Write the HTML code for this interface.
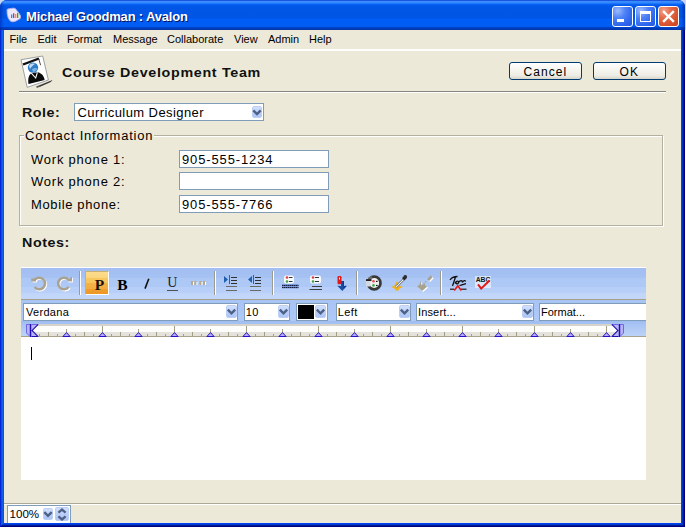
<!DOCTYPE html>
<html><head><meta charset="utf-8">
<style>
*{box-sizing:border-box;margin:0;padding:0}
html,body{width:686px;height:528px;overflow:hidden;background:#fff;font-family:"Liberation Sans",sans-serif;font-size:11px;color:#000;position:relative}
.a{position:absolute;overflow:visible}
.t{position:absolute;white-space:pre}
.box{position:absolute}
.dd{position:absolute;border:1px solid #BCCFF6;border-radius:2px;background:linear-gradient(#D2E0FD,#B8CCF8 60%,#AEC5F6)}
</style></head><body>
<div class="box" style="left:0;top:0;width:686px;height:30px;background:#C4D6F2"></div>
<div class="box" style="left:0;top:0;width:685px;height:527px;background:linear-gradient(90deg,#0019CF 0,#0831D9 1px,#166AEE 2px,#0855DD 3px,#0855DD 4px,#0048F0 681px,#0040D8 682px,#0028A8 683px,#000080 684px,#000080 685px);border-radius:7px 7px 0 0"></div>
<div class="box" style="left:0px;top:523px;width:685px;height:4px;clip-path:polygon(4px 0,681px 0,685px 4px,0 4px);background:linear-gradient(#0044F0 0,#0044F0 1px,#0038D4 1px,#0038D4 2px,#001C90 2px,#001C90 3px,#000080 3px)"></div>
<div class="box" style="left:0;top:0;width:685px;height:30px;border-radius:7px 7px 0 0;background:linear-gradient(#1A55DC 0,#1A55DC 1px,#3D8EFF 1px,#3388FF 3px,#0A66F6 4px,#0056E6 6px,#0055E4 18px,#005EF6 19px,#005CF2 26.5px,#0042C4 27.5px,#0034A8 30px)"></div>
<div class="box" style="left:0;top:0;width:685px;height:30px;border-radius:7px 7px 0 0;background:linear-gradient(90deg,rgba(0,30,160,.5) 0,rgba(0,30,160,0) 4px,rgba(0,30,160,0) 681px,rgba(0,30,160,.6) 685px)"></div>
<svg class="a" style="left:0;top:0" width="30" height="30">
<path d="M7 11 Q6.5 8.5 9 8.8 L12.5 8.2 Q15.5 7.6 16.5 10 L19 13.2 Q21.5 16.2 20.2 18.6 L16 21 Q12.5 22.6 10.5 21.2 L8.3 18.3 Q6.8 14 7 11 Z" fill="#ECE8FC" stroke="#B4ACEC" stroke-width=".9"/>
<rect x="11" y="14.5" width="1.3" height="3.5" fill="#3080F0"/><rect x="13" y="13.3" width="1.3" height="4.7" fill="#E83020"/>
<rect x="15" y="14" width="1.3" height="4" fill="#F89820"/><rect x="17" y="12.8" width="1.3" height="5.2" fill="#20B020"/>
</svg>
<div class="t" style="left:26px;top:10.40px;font-size:13px;line-height:13px;font-weight:700;letter-spacing:-0.17px;color:#fff;text-shadow:1px 1px 0 #001060">Michael Goodman : Avalon</div>
<div class="box" style="left:612px;top:6px;width:21px;height:21px;border:1px solid #fff;border-radius:3px;background:radial-gradient(circle at 25% 20%,#9DBBFF 0,#4F83F6 35%,#2E66EE 70%,#2259DE)"></div><div class="box" style="left:617px;top:19px;width:7px;height:3px;background:#fff"></div>
<div class="box" style="left:635px;top:6px;width:21px;height:21px;border:1px solid #fff;border-radius:3px;background:radial-gradient(circle at 25% 20%,#9DBBFF 0,#4F83F6 35%,#2E66EE 70%,#2259DE)"></div><div class="box" style="left:640px;top:11px;width:11px;height:11px;border:1px solid #fff;border-top-width:3px"></div>
<div class="box" style="left:658px;top:6px;width:21px;height:21px;border:1px solid #fff;border-radius:3px;background:radial-gradient(circle at 25% 20%,#F3A28B 0,#E46A48 35%,#D8502C 70%,#C84420)"></div><svg class="a" style="left:658px;top:6px" width="21" height="21"><path d="M6 6 L15 15 M15 6 L6 15" stroke="#fff" stroke-width="2.4" stroke-linecap="square"/></svg>
<div class="box" style="left:4px;top:30px;width:677px;height:493px;background:#ECE9D8"></div>
<div class="box" style="left:4px;top:49px;width:677px;height:2px;background:#fff"></div>
<div class="t" style="left:9.5px;top:33.69px;font-size:11px;line-height:11px;font-weight:400;letter-spacing:0px;color:#000;">File</div>
<div class="t" style="left:37.5px;top:33.69px;font-size:11px;line-height:11px;font-weight:400;letter-spacing:0px;color:#000;">Edit</div>
<div class="t" style="left:67px;top:33.69px;font-size:11px;line-height:11px;font-weight:400;letter-spacing:0px;color:#000;">Format</div>
<div class="t" style="left:113px;top:33.69px;font-size:11px;line-height:11px;font-weight:400;letter-spacing:0px;color:#000;">Message</div>
<div class="t" style="left:167px;top:33.69px;font-size:11px;line-height:11px;font-weight:400;letter-spacing:0px;color:#000;">Collaborate</div>
<div class="t" style="left:234px;top:33.69px;font-size:11px;line-height:11px;font-weight:400;letter-spacing:0px;color:#000;">View</div>
<div class="t" style="left:268px;top:33.69px;font-size:11px;line-height:11px;font-weight:400;letter-spacing:0px;color:#000;">Admin</div>
<div class="t" style="left:309px;top:33.69px;font-size:11px;line-height:11px;font-weight:400;letter-spacing:0px;color:#000;">Help</div>
<svg class="a" style="left:15px;top:52px" width="40" height="40" viewBox="0 0 40 40">
<path d="M21 34.5 L37.5 28 L35 30.5 L22 36 Z" fill="#5A5A5A"/>
<path d="M24 34 L37.5 28.2 L36 29.5 L25 34.5 Z" fill="#303030"/>
<path d="M6 7.7 L27.7 4 L33.4 28 L12.2 35.4 Z" fill="#fff" stroke="#A0A0A0" stroke-width="1"/>
<path d="M7.5 11.5 L23.5 5.5 L24.5 7.5 L8.5 13.5 Z" fill="#111"/>
<path d="M23.8 7 L25.6 13.2" stroke="#333" stroke-width=".9"/>
<circle cx="18" cy="15.6" r="5.2" fill="#2F7CC8"/>
<path d="M14 14 C15 11.5 18 11 20 12 C18.5 13 16.5 14.5 15 17 Z" fill="#CFE4F8" opacity=".9"/>
<path d="M17 17 C19 16 21 15.5 22.5 16.5 C21.5 18.5 19.5 20 18 20 Z" fill="#8EC0EC" opacity=".8"/>
<path d="M13.4 31.5 C12.8 27 13.6 23 16.5 21.3 L22.5 20.3 C26.5 21 29 24 29.6 28 L13.6 32 Z" fill="#0A0A0A"/>
<path d="M16.3 21.2 L20.7 26 L22.4 20.3" fill="none" stroke="#fff" stroke-width="1.1"/>
</svg>
<div class="t" style="left:62px;top:66.00px;font-size:13px;line-height:13px;font-weight:700;letter-spacing:0.62px;color:#111;transform:scaleX(1.1);transform-origin:0 0">Course Development Team</div>
<div class="box" style="left:509px;top:62px;width:73px;height:18px;border:1px solid #003C74;border-radius:3px;background:linear-gradient(#FFFFFF 0,#F6F5F0 40%,#ECEBE4 80%,#D8D4C8)"></div><div class="t" style="left:523.5px;top:66.34px;font-size:12px;line-height:12px;font-weight:400;letter-spacing:1.05px;color:#000;">Cancel</div>
<div class="box" style="left:593px;top:62px;width:73px;height:18px;border:1px solid #003C74;border-radius:3px;background:linear-gradient(#FFFFFF 0,#F6F5F0 40%,#ECEBE4 80%,#D8D4C8)"></div><div class="t" style="left:619.5px;top:66.34px;font-size:12px;line-height:12px;font-weight:400;letter-spacing:1.05px;color:#000;">OK</div>
<div class="box" style="left:19px;top:91px;width:647px;height:1px;background:#878580"></div>
<div class="box" style="left:19px;top:92px;width:647px;height:1px;background:#FFFFFF"></div>
<div class="t" style="left:22px;top:106.00px;font-size:13px;line-height:13px;font-weight:700;letter-spacing:0.45px;color:#111;transform:scaleX(1.1);transform-origin:0 0">Role:</div>
<div class="box" style="left:74px;top:103px;width:190px;height:18px;border:1px solid #7F9DB9;background:#fff"></div>
<div class="t" style="left:77.5px;top:105.80px;font-size:13px;line-height:13px;font-weight:400;letter-spacing:0.42px;color:#000;">Curriculum Designer</div>
<div class="dd" style="left:252px;top:105.5px;width:10px;height:12.5px"></div><svg class="a" style="left:252px;top:105.5px" width="10" height="12.5"><path d="M1.2999999999999998 4.35 L5.0 8.15 L8.7 4.35" fill="none" stroke="#4D6185" stroke-width="2.3"/></svg>
<div class="box" style="left:19px;top:135px;width:644px;height:91px;border:1px solid #B4B0A0;box-shadow:inset 1px 1px 0 #fff, 1px 1px 0 #fff"></div>
<div class="box" style="left:24px;top:128px;width:130px;height:12px;background:#ECE9D8"></div>
<div class="t" style="left:25.4px;top:130.04px;font-size:12px;line-height:12px;font-weight:400;letter-spacing:0.74px;color:#000;transform:scaleX(1.08);transform-origin:0 0">Contact Information</div>
<div class="t" style="left:31.3px;top:154.34px;font-size:12px;line-height:12px;font-weight:400;letter-spacing:0.74px;color:#000;transform:scaleX(1.08);transform-origin:0 0">Work phone 1:</div>
<div class="box" style="left:179px;top:150px;width:150px;height:18px;border:1px solid #7F9DB9;background:#fff"></div>
<div class="t" style="left:181.8px;top:154.04px;font-size:12px;line-height:12px;font-weight:400;letter-spacing:0.82px;color:#000;transform:scaleX(1.08);transform-origin:0 0">905-555-1234</div>
<div class="t" style="left:31.3px;top:176.34px;font-size:12px;line-height:12px;font-weight:400;letter-spacing:0.74px;color:#000;transform:scaleX(1.08);transform-origin:0 0">Work phone 2:</div>
<div class="box" style="left:179px;top:172px;width:150px;height:18px;border:1px solid #7F9DB9;background:#fff"></div>
<div class="t" style="left:30.6px;top:199.34px;font-size:12px;line-height:12px;font-weight:400;letter-spacing:0.6px;color:#000;transform:scaleX(1.08);transform-origin:0 0">Mobile phone:</div>
<div class="box" style="left:179px;top:195px;width:150px;height:18px;border:1px solid #7F9DB9;background:#fff"></div>
<div class="t" style="left:181.8px;top:199.04px;font-size:12px;line-height:12px;font-weight:400;letter-spacing:0.82px;color:#000;transform:scaleX(1.08);transform-origin:0 0">905-555-7766</div>
<div class="t" style="left:22px;top:236.00px;font-size:13px;line-height:13px;font-weight:700;letter-spacing:0.5px;color:#111;transform:scaleX(1.1);transform-origin:0 0">Notes:</div>
<div class="box" style="left:21px;top:267px;width:625px;height:1px;background:#fff"></div>
<div class="box" style="left:21px;top:268px;width:625px;height:31px;background:linear-gradient(#A2BEF2 0,#A6C2F3 10px,#AEC8F5 10px,#AFC9F6 19px,#B7CFF8 19px,#B8D0F8 25px,#C1D5FA 25px,#C3D7FA 31px)"></div>
<div class="box" style="left:21px;top:299px;width:625px;height:1px;background:#A59F8A"></div>
<div class="box" style="left:21px;top:300px;width:625px;height:37px;background:linear-gradient(#A8C4F5,#B4CDF8)"></div>
<div class="box" style="left:21px;top:337px;width:625px;height:143px;background:#fff"></div>
<div class="box" style="left:31px;top:347px;width:1px;height:13px;background:#000"></div>
<div class="box" style="left:79px;top:271px;width:1px;height:24px;background:#9D9C8C"></div><div class="box" style="left:80px;top:271px;width:1px;height:24px;background:#fff"></div>
<div class="box" style="left:214px;top:271px;width:1px;height:24px;background:#9D9C8C"></div><div class="box" style="left:215px;top:271px;width:1px;height:24px;background:#fff"></div>
<div class="box" style="left:272px;top:271px;width:1px;height:24px;background:#9D9C8C"></div><div class="box" style="left:273px;top:271px;width:1px;height:24px;background:#fff"></div>
<div class="box" style="left:356px;top:271px;width:1px;height:24px;background:#9D9C8C"></div><div class="box" style="left:357px;top:271px;width:1px;height:24px;background:#fff"></div>
<div class="box" style="left:440px;top:271px;width:1px;height:24px;background:#9D9C8C"></div><div class="box" style="left:441px;top:271px;width:1px;height:24px;background:#fff"></div>
<div class="box" style="left:85px;top:271px;width:24px;height:24px;border:1px solid #fff;border-top-color:#C8B070;border-left-color:#C8B070;background:linear-gradient(#FCDC8E 0,#FAD57C 6px,#F8C862 6px,#F7C35C 11px,#F4B246 11px,#F3AC40 17px,#EF9E2E 17px,#EC9826 22px)"></div>
<div class="t" style="left:94.8px;top:276.68px;font-size:15.5px;line-height:15.5px;font-weight:700;letter-spacing:0px;color:#181008;font-family:'Liberation Serif',serif">P</div>
<div class="t" style="left:117.3px;top:276.68px;font-size:15.5px;line-height:15.5px;font-weight:700;letter-spacing:0px;color:#000;font-family:'Liberation Serif',serif">B</div>
<div class="t" style="left:167.2px;top:276.35px;font-size:14px;line-height:14px;font-weight:400;letter-spacing:0px;color:#1A1A1A;font-family:'Liberation Serif',serif">U</div>
<div class="box" style="left:167px;top:290px;width:11px;height:1px;background:#505050"></div>
<svg class="a" style="left:0;top:0" width="686" height="528"><path d="M148.8 278.8 L145 288.6" stroke="#111" stroke-width="1.6"/></svg>
<svg class="a" style="left:0;top:0" width="686" height="528">
<!-- undo -->
<g transform="translate(.9 .9)" fill="#fff" stroke="#fff">
<path d="M34.6 280 A5.8 5.8 0 1 1 34.6 287" fill="none" stroke-width="2.5"/>
<path d="M31 278.6 L36 278.3 L36 281.6 L31.5 281.4 Z" stroke="none"/></g>
<path d="M34.6 280 A5.8 5.8 0 1 1 34.6 287" fill="none" stroke="#A8A290" stroke-width="2.5"/>
<path d="M31 278.6 L36 278.3 L36 281.6 L31.5 281.4 Z" fill="#A8A290"/>
<!-- redo -->
<g transform="translate(.9 .9)" fill="#fff" stroke="#fff">
<path d="M68.6 280 A5.8 5.8 0 1 0 68.6 287" fill="none" stroke-width="2.5"/>
<path d="M72 276.3 L72 281.6 L67 281.3 Z" stroke="none"/></g>
<path d="M68.6 280 A5.8 5.8 0 1 0 68.6 287" fill="none" stroke="#A8A290" stroke-width="2.5"/>
<path d="M72 276.3 L72 281.6 L67 281.3 Z" fill="#A8A290"/>
<!-- quote -->
<path d="M191 281h2v4h-2zM194.5 281h2v4h-2zM199.5 281h2v4h-2zM203 281h2v4h-2z" fill="#B8A888"/>
<path d="M193 282h1v3h-1zM196.5 282h1v3h-1zM201.5 282h1v3h-1zM205 282h1v3h-1z" fill="#fff"/>
<!-- indent -->
<path d="M224 276 L228 279.5 L224 283 Z" fill="#1F5FB0"/>
<rect x="229" y="275" width="1" height="9" fill="#3060A0"/>
<path d="M231 277h6v1h-6zM231 280h6v1h-6zM231 283h6v1h-6z" fill="#303030"/>
<path d="M226 286h11v1h-11zM226 290h11v1h-11z" fill="#6A6A64"/>
<!-- outdent -->
<path d="M252 276 L248 279.5 L252 283 Z" fill="#1F5FB0"/>
<rect x="253" y="275" width="1" height="9" fill="#3060A0"/>
<path d="M255 277h6v1h-6zM255 280h6v1h-6zM255 283h6v1h-6z" fill="#303030"/>
<path d="M250 286h11v1h-11zM250 290h11v1h-11z" fill="#6A6A64"/>
<!-- list icon 1 -->
<rect x="284" y="275.5" width="10" height="8" rx="2" fill="#fff" opacity=".9"/>
<circle cx="287" cy="277.5" r="1.3" fill="#E04040"/><circle cx="287" cy="281.5" r="1.3" fill="#40A040"/>
<path d="M289 277h3.5v1h-3.5zM289 281h3.5v1h-3.5z" fill="#333"/>
<rect x="282" y="284" width="16.5" height="4.5" fill="#7A98D8"/>
<path d="M282 285.5h16.5M282 287.5h16.5" stroke="#141C40" stroke-width="1" stroke-dasharray="1.5 .5"/>
<!-- list icon 2 -->
<rect x="310" y="275.5" width="11" height="8" rx="2" fill="#fff" opacity=".9"/>
<circle cx="313" cy="277.5" r="1.3" fill="#E04040"/><circle cx="313" cy="281.5" r="1.3" fill="#40A040"/>
<path d="M315 277h4v1h-4zM315 281h4v1h-4z" fill="#333"/>
<path d="M312 286h10v1h-10zM309.5 289h12.5v1h-12.5z" fill="#404040"/>
<!-- red/blue arrow -->
<path d="M341 281 L344 281 L344 286 L346.8 285.8 L342.3 291 L337.3 285.8 L341 286 Z" fill="#1A4CA8"/>
<path d="M342 281 L344 281 L344 286 L346.8 285.8 L344 289 Z" fill="#0A3080" opacity=".6"/>
<rect x="337.5" y="276" width="4" height="8.2" rx="1.3" fill="#E01818"/>
<rect x="339" y="277.5" width="1" height="2" fill="#fff"/>
<!-- circle icon -->
<circle cx="374.2" cy="283" r="6.3" fill="#EEF0F4" stroke="#383838" stroke-width="2.7"/>
<path d="M368.2 281 A6.3 6.3 0 0 1 372 277" fill="none" stroke="#6A6A6A" stroke-width="2.7"/>
<rect x="366" y="281" width="4.2" height="5.5" fill="#D4D8E0"/>
<rect x="366" y="279.2" width="5.5" height="1.8" fill="#1E1E1E"/>
<circle cx="373.5" cy="281.3" r="1.3" fill="#F04848"/><circle cx="373.5" cy="285.4" r="1.3" fill="#40A848"/>
<rect x="376" y="280.8" width="1.6" height="1.2" fill="#111"/><rect x="376" y="284.9" width="1.6" height="1.2" fill="#111"/>
<!-- eyedropper yellow -->
<path d="M397 281 L399.5 285.5 L403 287 L399.5 288.5 L398.5 290.5 L395.5 290.5 L394.5 288.5 L391 287 L394.5 285.5 Z" fill="#F2B01C"/>
<path d="M396 287 L403.5 279.5" stroke="#8C8C8C" stroke-width="2.6"/>
<path d="M396 287 L403.5 279.5" stroke="#E8F0F8" stroke-width="1"/>
<path d="M402 278 L405 275.5 L407 277.5 L404.5 280.5 Z" fill="#202020"/>
<rect x="403.5" y="275" width="3.5" height="3.5" rx="1.5" fill="#303030"/>
<!-- gray arrow -->
<g transform="translate(1 1)" fill="#fff">
<path d="M427 279.2 L430.8 275.2 L432.6 277.3 L429.2 281 Z"/>
<path d="M417.1 286.4 L419.6 284.5 L420.3 280.8 L421.6 285.2 L424.4 284 L427 286.7 L422.1 290.9 Z"/></g>
<path d="M427 279.2 L430.8 275.2 L432.6 277.3 L429.2 281 Z" fill="#A8A290"/>
<path d="M426.3 281.2 L422.4 285.1" stroke="#A8A290" stroke-width="1.3" stroke-dasharray="1.4 1"/>
<path d="M417.1 286.4 L419.6 284.5 L420.3 280.8 L421.6 285.2 L424.4 284 L427 286.7 L422.1 290.9 Z" fill="#A8A290"/>
<!-- signature -->
<path d="M450 280 C451.5 277.5 454.5 276.5 457.5 276.5 M455.5 277 C454.5 280 453.5 283 452.5 286 M455 283.5 C456 280.5 459 280.5 458.5 282.8 C458 284.3 456 284.3 456.3 282.5 M458.5 282.5 C460 280 463 280 462.2 282.5 C463.5 280.5 465.5 280 465.5 281.5 M459.5 285.5 C461.5 284.8 464 284.2 466 283.6" fill="none" stroke="#101010" stroke-width="1.3"/>
<path d="M450 288.5h4v1.5h-4zM461 288.5h5.5v1.5h-5.5z" fill="#404040"/>
<path d="M454.2 290.5 L457.8 285.8 L461.3 290.5" fill="none" stroke="#E01818" stroke-width="1.7"/>
<!-- ABC -->
<rect x="475" y="276" width="16" height="12" fill="#fff" opacity=".55"/>
<text x="475.8" y="282" font-family="Liberation Sans" font-weight="700" font-size="6.8" fill="#151515" letter-spacing="-.1">ABC</text>
<path d="M478 284.3 L481.2 288.6 L489.5 280.5" fill="none" stroke="#E01818" stroke-width="2"/>
</svg>
<div class="box" style="left:23px;top:303px;width:215px;height:18px;border:1px solid #7F9DB9;background:#fff"></div>
<div class="t" style="left:26px;top:306.99px;font-size:11px;line-height:11px;font-weight:400;letter-spacing:0.3px;color:#000;">Verdana</div>
<div class="dd" style="left:226px;top:305px;width:11px;height:13px"></div><svg class="a" style="left:226px;top:305px" width="11" height="13"><path d="M1.7999999999999998 4.6 L5.5 8.4 L9.2 4.6" fill="none" stroke="#4D6185" stroke-width="2.3"/></svg>
<div class="box" style="left:244px;top:303px;width:46px;height:18px;border:1px solid #7F9DB9;background:#fff"></div>
<div class="t" style="left:245.8px;top:306.99px;font-size:11px;line-height:11px;font-weight:400;letter-spacing:0.3px;color:#000;">10</div>
<div class="dd" style="left:278px;top:305px;width:11px;height:13px"></div><svg class="a" style="left:278px;top:305px" width="11" height="13"><path d="M1.7999999999999998 4.6 L5.5 8.4 L9.2 4.6" fill="none" stroke="#4D6185" stroke-width="2.3"/></svg>
<div class="box" style="left:296px;top:303px;width:32px;height:18px;border:1px solid #7F9DB9;background:#fff"></div>
<div class="box" style="left:298px;top:305px;width:16px;height:14px;background:#000"></div>
<div class="dd" style="left:315px;top:305px;width:11px;height:13px"></div><svg class="a" style="left:315px;top:305px" width="11" height="13"><path d="M1.7999999999999998 4.6 L5.5 8.4 L9.2 4.6" fill="none" stroke="#4D6185" stroke-width="2.3"/></svg>
<div class="box" style="left:336px;top:303px;width:75px;height:18px;border:1px solid #7F9DB9;background:#fff"></div>
<div class="t" style="left:337.8px;top:306.99px;font-size:11px;line-height:11px;font-weight:400;letter-spacing:0.4px;color:#000;">Left</div>
<div class="dd" style="left:399px;top:305px;width:11px;height:13px"></div><svg class="a" style="left:399px;top:305px" width="11" height="13"><path d="M1.7999999999999998 4.6 L5.5 8.4 L9.2 4.6" fill="none" stroke="#4D6185" stroke-width="2.3"/></svg>
<div class="box" style="left:416px;top:303px;width:118px;height:18px;border:1px solid #7F9DB9;background:#fff"></div>
<div class="t" style="left:418px;top:306.99px;font-size:11px;line-height:11px;font-weight:400;letter-spacing:0.15px;color:#000;">Insert...</div>
<div class="dd" style="left:522px;top:305px;width:11px;height:13px"></div><svg class="a" style="left:522px;top:305px" width="11" height="13"><path d="M1.7999999999999998 4.6 L5.5 8.4 L9.2 4.6" fill="none" stroke="#4D6185" stroke-width="2.3"/></svg>
<div class="box" style="left:539px;top:303px;width:107px;height:18px;border:1px solid #7F9DB9;border-right:none;background:#fff"></div>
<div class="t" style="left:541px;top:306.99px;font-size:11px;line-height:11px;font-weight:400;letter-spacing:0px;color:#000;">Format...</div>
<div class="box" style="left:21px;top:321px;width:625px;height:15px;background:linear-gradient(#9FBCF2 0,#A9C4F4 4px,#B2CBF6 9px,#BCD2F8 15px)"></div>
<div class="box" style="left:30px;top:324px;width:589px;height:2px;background:#D6D4CA"></div>
<div class="box" style="left:30px;top:326px;width:589px;height:6px;background:#FDFDFB"></div>
<div class="box" style="left:30px;top:332px;width:589px;height:4px;background:#E4E2DA"></div>
<div class="box" style="left:21px;top:336px;width:625px;height:1px;background:#A8A28C"></div>
<svg class="a" style="left:0;top:0" width="686" height="528">
<line x1="39.5" y1="334" x2="39.5" y2="336" stroke="#A49E84"/>
<line x1="48.5" y1="332" x2="48.5" y2="336" stroke="#A49E84"/>
<line x1="57.5" y1="334" x2="57.5" y2="336" stroke="#A49E84"/>
<line x1="66.5" y1="329" x2="66.5" y2="333" stroke="#A49E84"/>
<path d="M62.9 336.5 L66.5 332.6 L70.1 336.5 Z" fill="#B4B0F8" stroke="#2A10C8"/>
<line x1="75.5" y1="334" x2="75.5" y2="336" stroke="#A49E84"/>
<line x1="84.5" y1="332" x2="84.5" y2="336" stroke="#A49E84"/>
<line x1="93.5" y1="334" x2="93.5" y2="336" stroke="#A49E84"/>
<line x1="102.5" y1="326" x2="102.5" y2="333" stroke="#A49E84"/>
<path d="M98.9 336.5 L102.5 332.6 L106.1 336.5 Z" fill="#B4B0F8" stroke="#2A10C8"/>
<line x1="111.5" y1="334" x2="111.5" y2="336" stroke="#A49E84"/>
<line x1="120.5" y1="332" x2="120.5" y2="336" stroke="#A49E84"/>
<line x1="129.5" y1="334" x2="129.5" y2="336" stroke="#A49E84"/>
<line x1="138.5" y1="329" x2="138.5" y2="333" stroke="#A49E84"/>
<path d="M134.9 336.5 L138.5 332.6 L142.1 336.5 Z" fill="#B4B0F8" stroke="#2A10C8"/>
<line x1="147.5" y1="334" x2="147.5" y2="336" stroke="#A49E84"/>
<line x1="156.5" y1="332" x2="156.5" y2="336" stroke="#A49E84"/>
<line x1="165.5" y1="334" x2="165.5" y2="336" stroke="#A49E84"/>
<line x1="174.5" y1="326" x2="174.5" y2="333" stroke="#A49E84"/>
<path d="M170.9 336.5 L174.5 332.6 L178.1 336.5 Z" fill="#B4B0F8" stroke="#2A10C8"/>
<line x1="183.5" y1="334" x2="183.5" y2="336" stroke="#A49E84"/>
<line x1="192.5" y1="332" x2="192.5" y2="336" stroke="#A49E84"/>
<line x1="201.5" y1="334" x2="201.5" y2="336" stroke="#A49E84"/>
<line x1="210.5" y1="329" x2="210.5" y2="333" stroke="#A49E84"/>
<path d="M206.9 336.5 L210.5 332.6 L214.1 336.5 Z" fill="#B4B0F8" stroke="#2A10C8"/>
<line x1="219.5" y1="334" x2="219.5" y2="336" stroke="#A49E84"/>
<line x1="228.5" y1="332" x2="228.5" y2="336" stroke="#A49E84"/>
<line x1="237.5" y1="334" x2="237.5" y2="336" stroke="#A49E84"/>
<line x1="246.5" y1="326" x2="246.5" y2="333" stroke="#A49E84"/>
<path d="M242.9 336.5 L246.5 332.6 L250.1 336.5 Z" fill="#B4B0F8" stroke="#2A10C8"/>
<line x1="255.5" y1="334" x2="255.5" y2="336" stroke="#A49E84"/>
<line x1="264.5" y1="332" x2="264.5" y2="336" stroke="#A49E84"/>
<line x1="273.5" y1="334" x2="273.5" y2="336" stroke="#A49E84"/>
<line x1="282.5" y1="329" x2="282.5" y2="333" stroke="#A49E84"/>
<path d="M278.9 336.5 L282.5 332.6 L286.1 336.5 Z" fill="#B4B0F8" stroke="#2A10C8"/>
<line x1="291.5" y1="334" x2="291.5" y2="336" stroke="#A49E84"/>
<line x1="300.5" y1="332" x2="300.5" y2="336" stroke="#A49E84"/>
<line x1="309.5" y1="334" x2="309.5" y2="336" stroke="#A49E84"/>
<line x1="318.5" y1="326" x2="318.5" y2="333" stroke="#A49E84"/>
<path d="M314.9 336.5 L318.5 332.6 L322.1 336.5 Z" fill="#B4B0F8" stroke="#2A10C8"/>
<line x1="327.5" y1="334" x2="327.5" y2="336" stroke="#A49E84"/>
<line x1="336.5" y1="332" x2="336.5" y2="336" stroke="#A49E84"/>
<line x1="345.5" y1="334" x2="345.5" y2="336" stroke="#A49E84"/>
<line x1="354.5" y1="329" x2="354.5" y2="333" stroke="#A49E84"/>
<path d="M350.9 336.5 L354.5 332.6 L358.1 336.5 Z" fill="#B4B0F8" stroke="#2A10C8"/>
<line x1="363.5" y1="334" x2="363.5" y2="336" stroke="#A49E84"/>
<line x1="372.5" y1="332" x2="372.5" y2="336" stroke="#A49E84"/>
<line x1="381.5" y1="334" x2="381.5" y2="336" stroke="#A49E84"/>
<line x1="390.5" y1="326" x2="390.5" y2="333" stroke="#A49E84"/>
<path d="M386.9 336.5 L390.5 332.6 L394.1 336.5 Z" fill="#B4B0F8" stroke="#2A10C8"/>
<line x1="399.5" y1="334" x2="399.5" y2="336" stroke="#A49E84"/>
<line x1="408.5" y1="332" x2="408.5" y2="336" stroke="#A49E84"/>
<line x1="417.5" y1="334" x2="417.5" y2="336" stroke="#A49E84"/>
<line x1="426.5" y1="329" x2="426.5" y2="333" stroke="#A49E84"/>
<path d="M422.9 336.5 L426.5 332.6 L430.1 336.5 Z" fill="#B4B0F8" stroke="#2A10C8"/>
<line x1="435.5" y1="334" x2="435.5" y2="336" stroke="#A49E84"/>
<line x1="444.5" y1="332" x2="444.5" y2="336" stroke="#A49E84"/>
<line x1="453.5" y1="334" x2="453.5" y2="336" stroke="#A49E84"/>
<line x1="462.5" y1="326" x2="462.5" y2="333" stroke="#A49E84"/>
<path d="M458.9 336.5 L462.5 332.6 L466.1 336.5 Z" fill="#B4B0F8" stroke="#2A10C8"/>
<line x1="471.5" y1="334" x2="471.5" y2="336" stroke="#A49E84"/>
<line x1="480.5" y1="332" x2="480.5" y2="336" stroke="#A49E84"/>
<line x1="489.5" y1="334" x2="489.5" y2="336" stroke="#A49E84"/>
<line x1="498.5" y1="329" x2="498.5" y2="333" stroke="#A49E84"/>
<path d="M494.9 336.5 L498.5 332.6 L502.1 336.5 Z" fill="#B4B0F8" stroke="#2A10C8"/>
<line x1="507.5" y1="334" x2="507.5" y2="336" stroke="#A49E84"/>
<line x1="516.5" y1="332" x2="516.5" y2="336" stroke="#A49E84"/>
<line x1="525.5" y1="334" x2="525.5" y2="336" stroke="#A49E84"/>
<line x1="534.5" y1="326" x2="534.5" y2="333" stroke="#A49E84"/>
<path d="M530.9 336.5 L534.5 332.6 L538.1 336.5 Z" fill="#B4B0F8" stroke="#2A10C8"/>
<line x1="543.5" y1="334" x2="543.5" y2="336" stroke="#A49E84"/>
<line x1="552.5" y1="332" x2="552.5" y2="336" stroke="#A49E84"/>
<line x1="561.5" y1="334" x2="561.5" y2="336" stroke="#A49E84"/>
<line x1="570.5" y1="329" x2="570.5" y2="333" stroke="#A49E84"/>
<path d="M566.9 336.5 L570.5 332.6 L574.1 336.5 Z" fill="#B4B0F8" stroke="#2A10C8"/>
<line x1="579.5" y1="334" x2="579.5" y2="336" stroke="#A49E84"/>
<line x1="588.5" y1="332" x2="588.5" y2="336" stroke="#A49E84"/>
<line x1="597.5" y1="334" x2="597.5" y2="336" stroke="#A49E84"/>
<line x1="606.5" y1="326" x2="606.5" y2="333" stroke="#A49E84"/>
<path d="M602.9 336.5 L606.5 332.6 L610.1 336.5 Z" fill="#B4B0F8" stroke="#2A10C8"/>
<path d="M26.5 324.5 H30 V336.5 L26.5 333 Z" fill="#B8B4F8" stroke="#7066E4" stroke-width="1"/>
<rect x="30" y="324" width="1.6" height="13" fill="#2010B0"/>
<path d="M31.5 324 H38.5 L31.5 330.5 Z M31.5 330.5 L38.5 337 H31.5 Z" fill="#B8B4F8"/>
<path d="M31.5 324.5 H38" stroke="#7066E4" stroke-width="1"/>
<path d="M38.2 324.3 L32 330.5 L38.2 336.7 M31.5 336.5 H38" fill="none" stroke="#2010B0" stroke-width="1.1"/>
<path d="M623.5 324.5 H620 V336.5 L623.5 333 Z" fill="#B8B4F8" stroke="#7066E4" stroke-width="1"/>
<rect x="618.4" y="324" width="1.6" height="13" fill="#2010B0"/>
<path d="M618.5 324 H611.5 L618.5 330.5 Z M618.5 330.5 L611.5 337 H618.5 Z" fill="#B8B4F8"/>
<path d="M618.5 324.5 H612" stroke="#7066E4" stroke-width="1"/>
<path d="M611.8 324.3 L618 330.5 L611.8 336.7 M618.5 336.5 H612" fill="none" stroke="#2010B0" stroke-width="1.1"/>
</svg>
<div class="box" style="left:4px;top:503px;width:677px;height:1px;background:#ACA899"></div>
<div class="box" style="left:4px;top:504px;width:677px;height:1px;background:#fff"></div>
<div class="box" style="left:7px;top:505px;width:64px;height:18px;border:1px solid #7F9DB9;border-bottom:none;background:#fff"></div>
<div class="t" style="left:9.5px;top:508.48px;font-size:11.6px;line-height:11.6px;font-weight:400;letter-spacing:0px;color:#000;">100%</div>
<div class="dd" style="left:43px;top:508px;width:10px;height:12px"></div><svg class="a" style="left:43px;top:508px" width="10" height="12"><path d="M1.2999999999999998 4.1 L5.0 7.9 L8.7 4.1" fill="none" stroke="#4D6185" stroke-width="2.3"/></svg>
<div class="dd" style="left:55px;top:507px;width:14px;height:14px"></div>
<svg class="a" style="left:55px;top:507px" width="14" height="14"><path d="M3.4 5.6 L7 2.6 L10.6 5.6 M3.4 9.4 L7 12.4 L10.6 9.4" fill="none" stroke="#4D6185" stroke-width="2.3"/></svg>
</body></html>
